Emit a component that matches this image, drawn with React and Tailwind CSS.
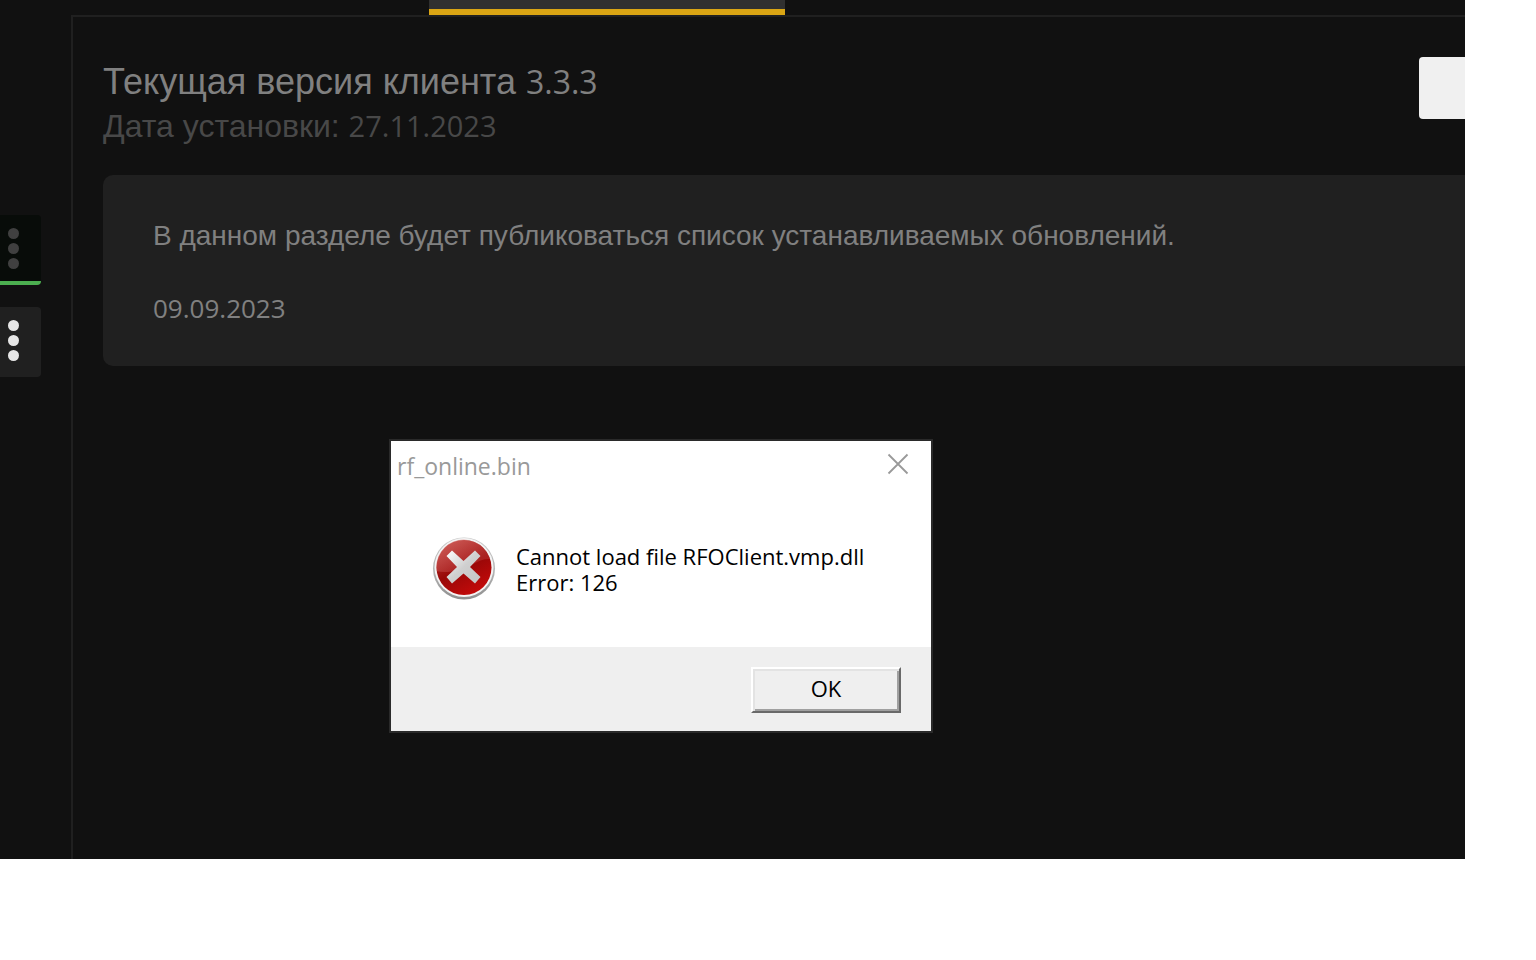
function MenuDots({ tone }) {
  return (
    <span className="flex flex-col gap-1">
      <span className={`size-[11px] rounded-full ${tone}`} />
      <span className={`size-[11px] rounded-full ${tone}`} />
      <span className={`size-[11px] rounded-full ${tone}`} />
    </span>
  );
}

function Sidebar() {
  return (
    <nav aria-label="Серверы" className="flex w-[71px] shrink-0 flex-col gap-[22px] pt-[215px]">
      <button
        type="button"
        aria-label="Меню активного сервера"
        className="flex h-[70px] w-[41px] items-center rounded-r-[4px] border-b-4 border-[#4caf50] bg-[#080c09] pl-2"
      >
        <MenuDots tone="bg-[#404040]" />
      </button>
      <button
        type="button"
        aria-label="Меню сервера"
        className="flex h-[70px] w-[41px] items-center rounded-r-[4px] border-b-4 border-[#202020] bg-[#202020] pl-2"
      >
        <MenuDots tone="bg-[#e6e6e6]" />
      </button>
    </nav>
  );
}

function ErrorIcon() {
  return (
    <svg viewBox="0 0 64 64" className="size-16 shrink-0" aria-hidden="true">
      <defs>
        <linearGradient id="rim" x1="0" y1="0" x2="0" y2="1">
          <stop offset="0" stopColor="#c9c9c9" />
          <stop offset="0.6" stopColor="#b0b0b0" />
          <stop offset="1" stopColor="#8e8e8e" />
        </linearGradient>
        <linearGradient id="ball" x1="0.2" y1="0" x2="0.75" y2="1">
          <stop offset="0" stopColor="#b83a36" />
          <stop offset="0.5" stopColor="#980808" />
          <stop offset="1" stopColor="#c80a0a" />
        </linearGradient>
        <linearGradient id="gloss" x1="0" y1="0" x2="1" y2="1">
          <stop offset="0" stopColor="#e07a74" stopOpacity="0.6" />
          <stop offset="1" stopColor="#c04040" stopOpacity="0.25" />
        </linearGradient>
        <linearGradient id="cross" x1="0" y1="0" x2="1" y2="1">
          <stop offset="0" stopColor="#ffffff" />
          <stop offset="0.5" stopColor="#cfcfcf" />
          <stop offset="1" stopColor="#c4c4c4" />
        </linearGradient>
      </defs>
      <circle cx="32" cy="32.5" r="31" fill="url(#rim)" />
      <circle cx="32" cy="31.5" r="29.5" fill="#f4f4f4" />
      <circle cx="32" cy="31.5" r="27.5" fill="url(#ball)" />
      <path d="M4.500 35A27.500 27.500 0 0 1 58 23C48 22 38 31 27 34C19 36 11 37 4.500 35Z" fill="url(#gloss)" />
      <path
        d="M20 14.500L31.500 25L43 14.500L48.500 20L38 31L48.500 41L43 47.500L31.500 37.500L20 47.500L14.500 41L25 31L14.500 20Z"
        fill="url(#cross)"
      />
    </svg>
  );
}

function ErrorDialog() {
  return (
    <section
      role="dialog"
      aria-labelledby="dialog-title"
      className="absolute top-[439px] left-[389px] w-[544px] border-2 border-[#2a2a2a] bg-white font-['Open_Sans',sans-serif]"
    >
      <header className="flex items-start justify-between pr-[22px] pl-[6px]">
        <h2 id="dialog-title" className="pt-[6px] text-[23px] leading-[38px] text-[#999999]">
          rf_online.bin
        </h2>
        <button type="button" aria-label="Закрыть" className="pt-3">
          <svg viewBox="0 0 22 22" className="size-[22px]" fill="none" stroke="#999999" strokeWidth="1.8">
            <path d="M1.500 1.500L20.500 20.500M20.500 1.500L1.500 20.500" />
          </svg>
        </button>
      </header>
      <div className="flex items-start gap-5 px-[41px] pt-[51px] pb-[47px]">
        <ErrorIcon />
        <p className="pt-[7px] text-[22px] leading-[26px] whitespace-nowrap text-black">
          Cannot load file RFOClient.vmp.dll
          <br />
          Error: 126
        </p>
      </div>
      <footer className="flex justify-end bg-[#efefef] px-[30px] pt-5 pb-[18px]">
        <button
          type="button"
          className="h-[46px] w-[150px] border-2 border-t-white border-r-[#696969] border-b-[#696969] border-l-white pb-[3px] text-[22px] text-black shadow-[inset_2px_2px_0_#e3e3e3,inset_-2px_-2px_0_#a0a0a0]"
        >
          OK
        </button>
      </footer>
    </section>
  );
}

export default function App() {
  return (
    <div className="min-h-screen bg-white pr-[71px] font-['Liberation_Sans',Arial,sans-serif]">
      <div className="relative flex overflow-hidden bg-[#111111]">
        <Sidebar />
        <main className="min-w-0 grow">
          <div className="flex pl-[358px]">
            <button
              type="button"
              aria-label="Обновления"
              className="h-[15px] w-[356px] border-b-[6px] border-[#daa514] bg-[#303030]"
            />
          </div>
          <div className="border-t-2 border-l-2 border-[#202020] pt-10 pb-[493px] pl-[30px]">
            <div className="flex items-start justify-between">
              <div className="pt-1">
                <h1 className="text-[36px] leading-[42px] text-[#808080]">
                  Текущая версия клиента <span className="font-['Open_Sans',sans-serif] text-[32px]">3.3.3</span>
                </h1>
                <p className="text-[32px] leading-[46px] text-[#484848]">
                  Дата установки: <span className="font-['Open_Sans',sans-serif] text-[29px]">27.11.2023</span>
                </p>
              </div>
              <button
                type="button"
                aria-label="Проверить обновления"
                className="h-[62px] w-[46px] rounded-l-[4px] bg-[#f0f0f0]"
              />
            </div>
            <article className="mt-[26px] rounded-l-[10px] bg-[#202020] px-[50px] pt-[42px] pb-[39px] text-[28px] leading-[37px] text-[#808080]">
              <p>В данном разделе будет публиковаться список устанавливаемых обновлений.</p>
              <p className="pt-9 font-['Open_Sans',sans-serif] text-[26px]">09.09.2023</p>
            </article>
          </div>
        </main>
        <ErrorDialog />
      </div>
    </div>
  );
}
